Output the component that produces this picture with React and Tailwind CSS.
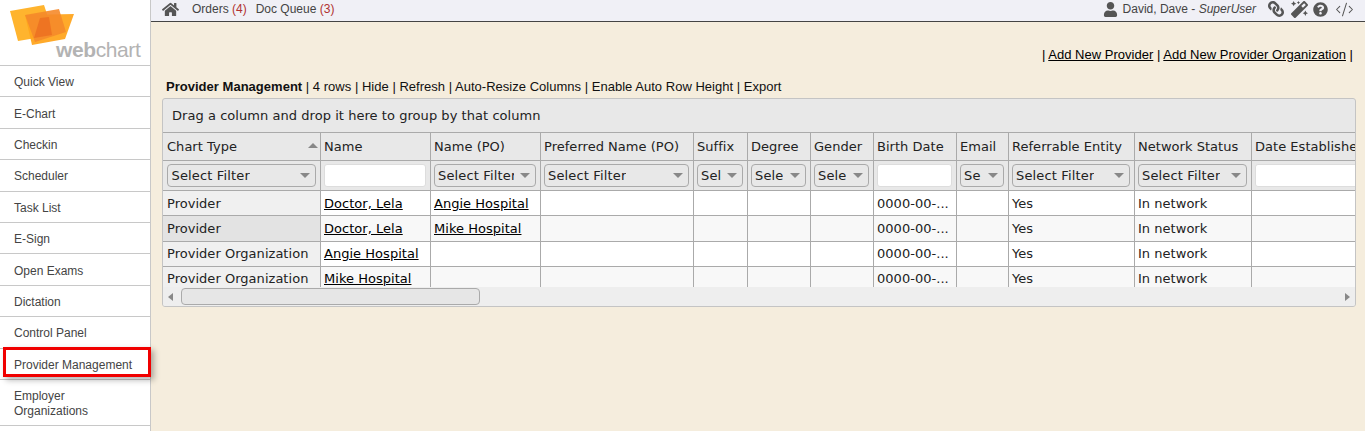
import React from "react";
import { FaHome, FaUser, FaLink, FaMagic, FaQuestionCircle } from "react-icons/fa";
import { CodeXml } from "lucide-react";

const nav = ["Quick View","E-Chart","Checkin","Scheduler","Task List","E-Sign","Open Exams","Dictation","Control Panel","Provider Management"];
const widths = [157,110,110,153,54,63,63,83,52,126,117,120];
const heads = ["Chart Type","Name","Name (PO)","Preferred Name (PO)","Suffix","Degree","Gender","Birth Date","Email","Referrable Entity","Network Status","Date Established"];
const filters = ["Select Filter",null,"Select Filter","Select Filter","Sel","Sele","Sele",null,"Se","Select Filter","Select Filter",null];
const rows = [
  ["Provider","Doctor, Lela","Angie Hospital"],
  ["Provider","Doctor, Lela","Mike Hospital"],
  ["Provider Organization","Angie Hospital",""],
  ["Provider Organization","Mike Hospital",""],
];
const firstBg = ["bg-[#f0f0f0]","bg-[#e3e3e3]","bg-[#f0f0f0]","bg-[#f0f0f0]"];
const rowBg = ["bg-white h-[25px]","bg-[#f8f8f8] h-[26px]","bg-white h-[25px]","bg-[#f8f8f8] h-[25px]"];
const rowPad = ["pt-[2px]","pt-[1px]","pt-0","pt-0"];

function Filter({ text }) {
  if (text === null) {
    return <div className="h-[23px] w-full rounded-[3px] border border-[#dddddd] bg-white" />;
  }
  return (
    <div className="flex h-[23px] w-full items-center justify-between rounded-[4px] border border-[#aaaaaa] bg-[#e8e8e8] pl-[3.5px] pr-[5px]">
      <span className="min-w-0 overflow-hidden whitespace-nowrap pt-[1px] tracking-[0.15px]">{text}</span>
      <span className="ml-[6px] shrink-0 border-x-[5px] border-t-[5px] border-x-transparent border-t-[#888888]" />
    </div>
  );
}

export default function App() {
  return (
    <div className="flex h-[431px] w-[1365px] overflow-hidden bg-[#f5eddd] font-['Liberation_Sans',Arial,sans-serif]">
      <aside className="relative w-[151px] shrink-0 border-r border-[#c8c8c8] bg-white text-[12px] text-[#444444]">
        <div className="relative h-[66px] border-b border-[#c8c8c8]">
          <svg width="80" height="50" viewBox="0 0 80 50" className="absolute left-0 top-0">
            <polygon points="10,11 44,5 54,35 18,41" fill="#ffb42e" />
            <polygon points="25,15 74,14 65,39 32,45" fill="#ffa51f" opacity="0.95" />
            <polygon points="25,15 59,9 66,32 35,42" fill="#f58a2a" opacity="0.9" />
            <polygon points="40,18 49,17 52,35 34,38" fill="#ee7422" />
          </svg>
          <div className="absolute left-[56px] top-[39px] whitespace-nowrap text-[21px] leading-[22px] tracking-[-0.4px] text-[#b3b3b3]">
            <span className="font-bold">web</span><span>chart</span>
          </div>
        </div>
        {nav.map((n) => (
          <div key={n} className="flex h-[31.4px] items-center border-b border-[#c8c8c8] pl-[14px] pt-[2px]">{n}</div>
        ))}
        <div className="flex h-[46px] items-center border-b border-[#c8c8c8] pl-[14px] pt-[3px] leading-[15px]">Employer<br />Organizations</div>
        <div className="absolute left-[3px] top-[347px] h-[30px] w-[148px] border-[3px] border-[#f00000] shadow-[3px_3px_6px_rgba(0,0,0,0.3)]" />
      </aside>

      <main className="min-w-0 flex-1">
        <header className="flex h-[22px] items-center justify-between border-b border-[#444444] bg-[#f0f0f6] pb-[3px] pl-[11px] pr-[11px] text-[12px] text-[#444444]">
          <div className="flex items-center">
            <FaHome className="text-[17px] text-[#555555]" />
            <span className="ml-[13px]">Orders <span className="text-[#b03030]">(4)</span></span>
            <span className="ml-[9px]">Doc Queue <span className="text-[#b03030]">(3)</span></span>
          </div>
          <div className="flex items-center">
            <FaUser className="mr-[5px] text-[15px] text-[#555555]" />
            <span>David, Dave - <i>SuperUser</i></span>
            <FaLink className="ml-[12px] -scale-x-100 text-[16px] text-[#555555]" />
            <FaMagic className="ml-[7px] text-[17px] text-[#555555]" />
            <FaQuestionCircle className="ml-[5px] text-[15px] text-[#555555]" />
            <CodeXml className="ml-[7px] text-[#555555]" size={19} strokeWidth={1.3} />
          </div>
        </header>

        <div className="flex h-[64px] items-start justify-end pr-[12px] pt-[25px] text-[13px] leading-[16px] tracking-[0.02px] text-black">
          <span>| <a className="underline">Add New Provider</a> | <a className="underline">Add New Provider Organization</a> |</span>
        </div>

        <div className="h-[12px] whitespace-nowrap pl-[15px] pt-[1px] text-[13px] leading-[0px] tracking-[0.02px] text-[#111111]">
          <b>Provider Management</b> | 4 rows | Hide | Refresh | Auto-Resize Columns | Enable Auto Row Height | Export
        </div>

        <section className="ml-[11px] w-[1194px] overflow-hidden rounded-[3px] border border-[#c4c4c4] bg-[#e8e8e8] font-['DejaVu_Sans',Verdana,sans-serif] text-[13px] tracking-[0.03px] text-[#222222]">
          <div className="flex h-[34px] items-center border-b border-[#aaaaaa] pl-[9px] pt-[1px] tracking-[0.05px]">Drag a column and drop it here to group by that column</div>
          <div className="h-[154px] overflow-hidden">
            <table className="table-fixed border-collapse" style={{ width: widths.reduce((a, b) => a + b, 0) }}>
              <colgroup>
                {widths.map((w, i) => <col key={i} style={{ width: w }} />)}
              </colgroup>
              <thead>
                <tr className="h-[27px]">
                  {heads.map((h, i) => (
                    <th key={h} className="relative overflow-hidden whitespace-nowrap border-r border-b border-[#aaaaaa] pl-[3.5px] pr-[3px] text-left font-normal first:pl-[4px] last:border-r-0">
                      {h}
                      {i === 0 && <span className="absolute right-[2px] top-[10px] border-x-[5px] border-b-[5px] border-x-transparent border-b-[#888888]" />}
                    </th>
                  ))}
                </tr>
                <tr className="h-[30px]">
                  {filters.map((f, i) => (
                    <th key={i} className="overflow-hidden border-r border-b border-[#aaaaaa] pl-[3px] pr-[4px] text-left font-normal first:pl-[4px] last:border-r-0">
                      <Filter text={f} />
                    </th>
                  ))}
                </tr>
              </thead>
              <tbody>
                {rows.map((r, ri) => (
                  <tr key={ri} className={rowBg[ri]}>
                    {heads.map((_, ci) => {
                      let c = "";
                      if (ci < 3) c = r[ci];
                      if (ci === 7) c = "0000-00-...";
                      if (ci === 9) c = "Yes";
                      if (ci === 10) c = "In network";
                      const link = ci === 1 || ci === 2;
                      return (
                        <td key={ci} className={`overflow-hidden whitespace-nowrap border-r border-b border-[#aaaaaa] pl-[3.5px] pr-[3px] first:pl-[4px] ${rowPad[ri]} last:border-r-0 ${ci === 0 ? firstBg[ri] : ""}`}>
                          {link ? <a className="text-black underline">{c}</a> : c}
                        </td>
                      );
                    })}
                  </tr>
                ))}
              </tbody>
            </table>
          </div>
          <div className="flex h-[19px] items-center justify-between bg-[#eeeeee] pl-[5px] pr-[5px]">
            <div className="flex items-center">
              <span className="border-y-[4px] border-r-[5px] border-y-transparent border-r-[#888888]" />
              <div className="ml-[8px] h-[17px] w-[299px] rounded-[4px] border border-[#aaaaaa] bg-[#e6e6e6]" />
            </div>
            <span className="border-y-[4px] border-l-[5px] border-y-transparent border-l-[#888888]" />
          </div>
        </section>
      </main>
    </div>
  );
}
